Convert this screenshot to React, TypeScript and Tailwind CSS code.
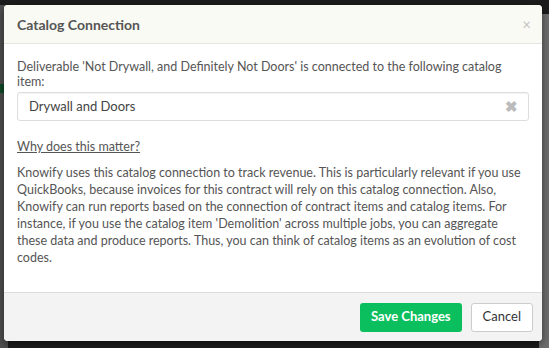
export default function App() {
  return (
    <div className="relative h-[348px] w-[549px] overflow-hidden bg-[#1c1c1c] font-['Lato','Open_Sans',sans-serif]">
      {/* backdrop remnants */}
      <div className="absolute left-0 top-[5px] h-[343px] w-[8px] bg-[#4f4f4f]" />
      <div className="absolute left-0 top-[84px] h-[9px] w-[8px] bg-[#0d4a26]" />
      <div className="absolute right-0 top-[14px] h-[334px] w-[10px] bg-[#6e6e6e]" />

      <div className="absolute left-[4px] top-[5px] flex h-[336px] w-[538px] flex-col overflow-hidden rounded-[4px] bg-white shadow-[0_3px_8px_rgba(0,0,0,0.5)]">
        <div className="flex h-[39px] shrink-0 items-center justify-between border-b border-[#e5e5e5] bg-[#fafaf4] pl-[13px] pr-[11px]">
          <h3 className="text-[14px] font-bold text-[#555]">Catalog Connection</h3>
          <span className="text-[15px] leading-none text-[#c4c4c4]">×</span>
        </div>

        <div className="flex-1 px-[13px] pt-[15px] text-[12.5px] leading-[15px] text-[#555]">
          <p>
            Deliverable 'Not Drywall, and Definitely Not Doors' is connected to the following catalog
            <br />
            item:
          </p>
          <div className="mt-[3px] flex h-[29px] items-center justify-between rounded-[3px] border border-[#ddd] pl-[11px] pr-[10px] shadow-[inset_0_1px_1px_rgba(0,0,0,0.05)]">
            <span className="text-[13px] text-[#444]">Drywall and Doors</span>
            <span className="text-[15px] font-bold leading-none text-[#bbb]">✖</span>
          </div>
          <p className="mt-[18px] underline">Why does this matter?</p>
          <p className="mt-[10px] leading-[17px]">
            Knowify uses this catalog connection to track revenue. This is particularly relevant if you use
            <br />
            QuickBooks, because invoices for this contract will rely on this catalog connection. Also,
            <br />
            Knowify can run reports based on the connection of contract items and catalog items. For
            <br />
            instance, if you use the catalog item 'Demolition' across multiple jobs, you can aggregate
            <br />
            these data and produce reports. Thus, you can think of catalog items as an evolution of cost
            <br />
            codes.
          </p>
        </div>

        <div className="flex h-[49px] shrink-0 items-center justify-end gap-[9px] border-t border-[#ddd] bg-[#f3f3f3] pr-[9px]">
          <button className="h-[29px] rounded-[3px] bg-[#0cbf5e] px-[11px] text-[13px] font-bold text-white">
            Save Changes
          </button>
          <button className="h-[29px] rounded-[3px] border border-[#ccc] bg-white px-[11px] text-[13px] text-[#333]">
            Cancel
          </button>
        </div>
      </div>
    </div>
  );
}
